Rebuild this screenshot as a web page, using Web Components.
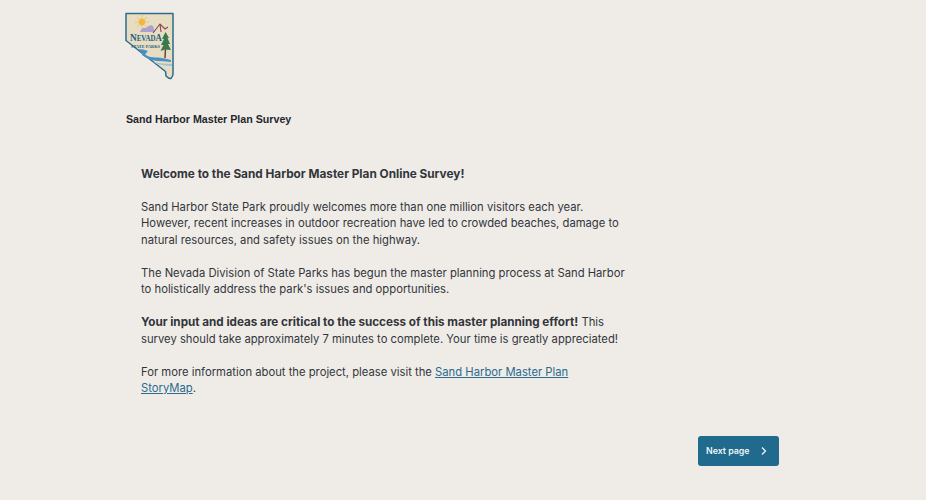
<!DOCTYPE html>
<html lang="en">
<head>
<meta charset="utf-8">
<title>Sand Harbor Master Plan Survey</title>
<style>
  html, body { margin: 0; background: #efece8; }
  body { font-family: Inter, "Noto Sans", sans-serif; color: #32363a; }
  survey-intro p b { font-size: 11.680px; }
  survey-intro a { color: #2a6a8c; }
</style>
</head>
<body>
<survey-page>
  <park-logo slot="logo"></park-logo>
  <span slot="title">Sand Harbor Master Plan Survey</span>
  <survey-intro>
    <b slot="heading">Welcome to the Sand Harbor Master Plan Online Survey!</b>
    <p>Sand Harbor State Park proudly welcomes more than one million visitors each year.<br>However, recent increases in outdoor recreation have led to crowded beaches, damage to<br>natural resources, and safety issues on the highway.</p>
    <p>The Nevada Division of State Parks has begun the master planning process at Sand Harbor<br>to holistically address the park's issues and opportunities.</p>
    <p><b>Your input and ideas are critical to the success of this master planning effort!</b> This<br>survey should take approximately 7 minutes to complete. Your time is greatly appreciated!</p>
    <p>For more information about the project, please visit the <a href="#">Sand Harbor Master Plan<br>StoryMap</a>.</p>
  </survey-intro>
  <next-button slot="next">Next page</next-button>
</survey-page>
<script>
class SurveyPage extends HTMLElement {
  constructor() {
    super();
    this.attachShadow({ mode: 'open' });
    this.shadowRoot.innerHTML = `
      <style>
        :host { display: block; width: 926px; height: 500px; box-sizing: border-box; padding: 12px 147px 0 125px; overflow: hidden; }
        .logo { display: flex; height: 68px; }
        .title { margin-top: 32px; height: 14px; font: bold 10.670px/14px "Liberation Sans", Arial, sans-serif; color: #24272b; padding-left: 1px; }
        .foot { display: flex; justify-content: flex-end; margin-top: 39px; }
      </style>
      <div class="logo"><slot name="logo"></slot></div>
      <div class="title"><slot name="title"></slot></div>
      <slot></slot>
      <div class="foot"><slot name="next"></slot></div>
    `;
  }
}
customElements.define('survey-page', SurveyPage);

class ParkLogo extends HTMLElement {
  constructor() {
    super();
    this.attachShadow({ mode: 'open' });
    this.shadowRoot.innerHTML = `
      <style>
        :host { display: block; width: 49px; height: 68px; }
        svg { display: block; }
        text { font-family: "Liberation Serif", serif; font-weight: bold; fill: #1d5d7e; }
      </style>
      <svg width="49" height="68" viewBox="0 0 49 68">
        <path d="M1 1.500H48V62Q48 64 46 66.500Q44 67 41 64L40.500 59.500L1 28.500Z" fill="#e7ddc3" stroke="#2c6c8c" stroke-width="1.500" stroke-linejoin="round"/>
        <circle cx="17" cy="10" r="3.400" fill="#f0b840"/>
        <path d="M17 3V5.500M17 14.500V17M10 10H12.500M21.500 10H24M12 5L14 7M20 13L22 15M22 5L20 7M14 13L12 15" stroke="#f0c263" stroke-width="1"/>
        <path d="M15 20Q17 15 21 16Q25 12 28 14L30 20Z" fill="#a8a2cd"/>
        <path d="M28 21L35 12L40 17L43 15M35 12L36 20" fill="none" stroke="#8d4656" stroke-width="1.100"/>
        <path d="M40 46L40.500 36" stroke="#7d3a45" stroke-width="1.500"/>
        <path d="M40.500 20L37 27L39 27L36 33L38.500 33L35.500 39L40 37.500L46 38L43 32L45 32L42.500 26L44 26Z" fill="#39794c"/>
        <text x="5" y="29" font-size="7.500" textLength="32" lengthAdjust="spacingAndGlyphs"><tspan font-size="10">N</tspan>EVAD<tspan font-size="9.500">A</tspan></text>
        <text x="6" y="36" font-size="4.200" textLength="29" lengthAdjust="spacingAndGlyphs">STATE PARKS</text>
        <path d="M12 37Q19 37 23 39Q21 41 20 43Q26 46 33 45.500Q40 46 46 48V50Q38 49 32 49Q23 48 17 43Q18 40 12 37Z" fill="#4b90c5"/>
        <path d="M27 50Q37 52 47 52V54Q37 54 27 50Z" fill="#9cc3d6"/>
      </svg>
    `;
  }
}
customElements.define('park-logo', ParkLogo);

class SurveyIntro extends HTMLElement {
  constructor() {
    super();
    this.attachShadow({ mode: 'open' });
    this.shadowRoot.innerHTML = `
      <style>
        :host { display: block; margin-top: 39.500px; padding-left: 16px; font-size: 11.250px; line-height: 16.500px; color: #32363a; }
        .head { height: 16.500px; margin-bottom: 16.500px; font-size: 11.800px; }
        ::slotted(p) { margin: 0 0 16.500px; white-space: nowrap; }
      </style>
      <div class="head"><slot name="heading"></slot></div>
      <slot></slot>
    `;
  }
}
customElements.define('survey-intro', SurveyIntro);

class NextButton extends HTMLElement {
  constructor() {
    super();
    this.attachShadow({ mode: 'open' });
    this.shadowRoot.innerHTML = `
      <style>
        :host { display: inline-flex; }
        button { display: flex; align-items: center; gap: 10px; width: 81px; height: 30px; padding: 0 0 0 8px; border: 0; border-radius: 3px; background: #1f6a8d; color: #f1f4f6; font: 600 8.800px Inter, sans-serif; }
        svg { display: block; }
      </style>
      <button type="button"><slot></slot>
        <svg width="8" height="10" viewBox="0 0 8 10"><path d="M2 1.500L5.500 5L2 8.500" fill="none" stroke="#f1f4f6" stroke-width="1.300"/></svg>
      </button>
    `;
  }
}
customElements.define('next-button', NextButton);
</script>
</body>
</html>
